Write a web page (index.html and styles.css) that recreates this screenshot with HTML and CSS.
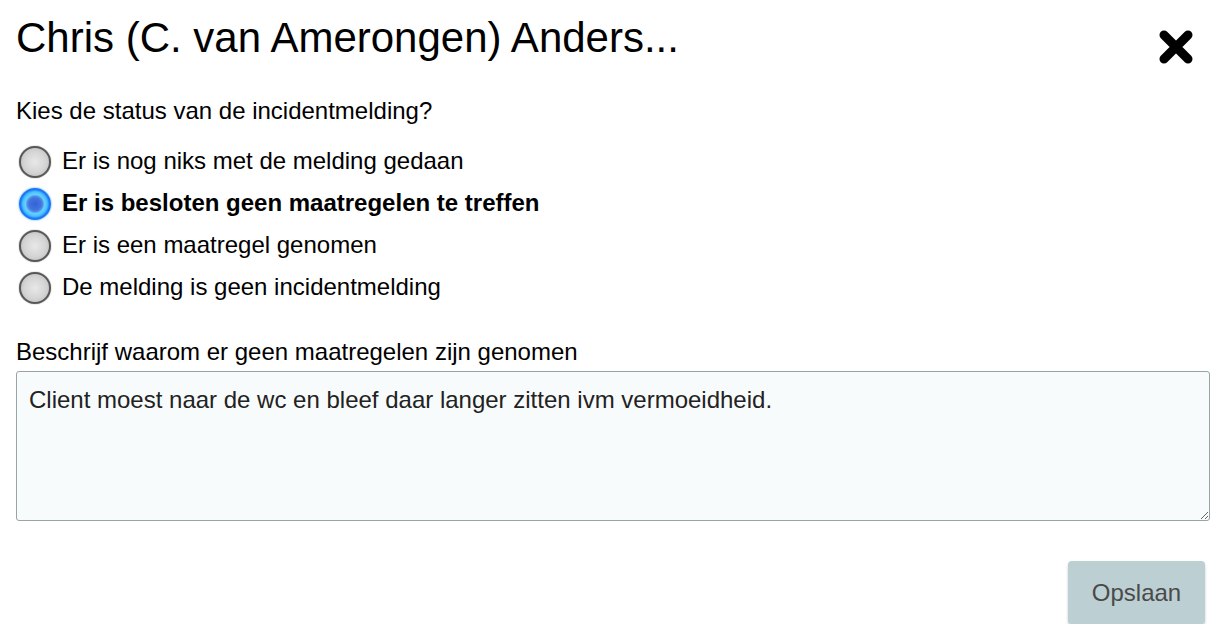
FILE: index.html
```html
<!doctype html>
<html>
<head>
    <meta charset="utf-8">
    <meta name="viewport" content="width=device-width, initial-scale=1.0">
    <title>Incidentmelding</title>
    <link rel="stylesheet" href="styles.css">
</head>
<body>
    <div class="header">
        <h1 class="title">Chris (C. van Amerongen) Anders...</h1>
        <button class="close" title="Sluiten">
            <svg width="34" height="34" viewBox="0 0 34 34">
                <path d="M5 5 L29 29 M29 5 L5 29" stroke="#000" stroke-width="9" stroke-linecap="round" fill="none"/>
            </svg>
        </button>
    </div>
    <p class="question">Kies de status van de incidentmelding?</p>
    <div class="options">
        <label class="option"><input type="radio" name="status"> <span>Er is nog niks met de melding gedaan</span></label>
        <label class="option"><input type="radio" name="status" checked> <span>Er is besloten geen maatregelen te treffen</span></label>
        <label class="option"><input type="radio" name="status"> <span>Er is een maatregel genomen</span></label>
        <label class="option"><input type="radio" name="status"> <span>De melding is geen incidentmelding</span></label>
    </div>
    <label class="fieldlabel" for="reden">Beschrijf waarom er geen maatregelen zijn genomen</label>
    <textarea id="reden" class="reason">Client moest naar de wc en bleef daar langer zitten ivm vermoeidheid.</textarea>
    <div class="actions">
        <button class="save">Opslaan</button>
    </div>
</body>
</html>
```

FILE: styles.css
```css
html, body {
    margin: 0;
    padding: 0;
}
body {
    background-color: white;
    color: black;
    font-family: "Liberation Sans", Arial, sans-serif;
    font-size: 24px;
    line-height: 27px;
    padding: 0 15px 0 16px;
}
.header {
    display: flex;
    justify-content: space-between;
    align-items: flex-start;
    padding-top: 14px;
}
.title {
    margin: 0;
    font-size: 42px;
    line-height: 48px;
    font-weight: normal;
}
.close {
    margin: 16px 17px 0 0;
    padding: 0;
    border: none;
    background: none;
    width: 34px;
    height: 34px;
    cursor: pointer;
}
.close svg {
    display: block;
}
.question {
    margin: 33px 0 15px 0;
}
.options {
    display: flex;
    flex-direction: column;
}
.option {
    display: flex;
    align-items: center;
    height: 42px;
}
.option input {
    -webkit-appearance: none;
    appearance: none;
    width: 32px;
    height: 32px;
    margin: 6px 11px 2px 3px;
    border-radius: 50%;
    box-sizing: border-box;
    border: 2px solid #575757;
    background: radial-gradient(circle, #e8e8e8 0%, #d4d4d4 55%, #b2b2b2 100%);
    box-shadow: 0 0 1px #333;
}
.option input:checked {
    border: 2px solid #1a78f2;
    background: radial-gradient(circle, #3363d5 0, #3f74df 6px, #5a8ee8 8px, #62d2ff 9.5px, #4cc2ff 12px, #2a8cff 14px);
    box-shadow: 0 0 2px #2f8cff;
}
.option input:checked + span {
    font-weight: bold;
}
.fieldlabel {
    display: block;
    margin-top: 31px;
}
.reason {
    display: block;
    box-sizing: border-box;
    width: 100%;
    height: 150px;
    margin-top: 6px;
    padding: 10px 12px;
    font-family: "Liberation Sans", Arial, sans-serif;
    font-size: 24px;
    line-height: 1.5;
    color: #222;
    background-color: #f8fbfc;
    border: 1px solid #9aa3a5;
    border-radius: 3px;
}
.actions {
    display: flex;
    justify-content: flex-end;
    margin-top: 40px;
}
.save {
    width: 137px;
    height: 63px;
    margin-right: 5px;
    border: none;
    border-radius: 4px;
    background-color: #bccfd3;
    color: #4a4a4a;
    font-family: "Liberation Sans", Arial, sans-serif;
    font-size: 24px;
    box-shadow: 0 2px 3px rgba(0, 0, 0, 0.2);
}
```
